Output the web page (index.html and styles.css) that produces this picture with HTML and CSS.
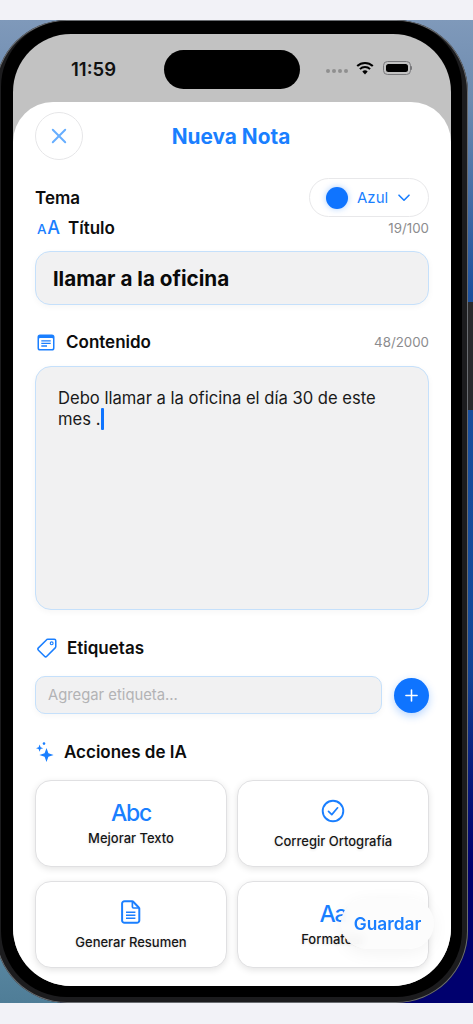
FILE: index.html
```html
<!DOCTYPE html>
<html lang="es">
<head>
<meta charset="utf-8">
<title>Nueva Nota</title>
<link rel="stylesheet" href="styles.css">
</head>
<body>
<div class="wallpaper">
  <div class="side-button"></div>
  <div class="frame">
    <div class="bezel">
      <div class="screen">
        <div class="island"></div>
        <div class="status">
          <span class="time">11:59</span>
          <div class="status-right">
            <div class="signal"><i></i><i></i><i></i><i></i></div>
            <svg class="wifi" viewBox="0 0 18 14"><path d="M9 13.6 6.3 10.6a3.9 3.9 0 0 1 5.4 0Z" fill="#000"/><path d="M3.9 8.1a7.4 7.4 0 0 1 10.2 0" fill="none" stroke="#000" stroke-width="2"/><path d="M1.2 5.1a11.4 11.4 0 0 1 15.6 0" fill="none" stroke="#000" stroke-width="2.1"/></svg>
            <div class="battery"><div class="battery-fill"></div></div>
            <div class="battery-tip"></div>
          </div>
        </div>
        <div class="sheet">
          <header class="head">
            <button class="close"><svg viewBox="0 0 18 18"><path d="M2 2 16 16M16 2 2 16" fill="none" stroke="#66aeff" stroke-width="2.2" stroke-linecap="round"/></svg></button>
            <h1 class="title">Nueva Nota</h1>
          </header>
          <div class="row theme-row">
            <span class="label">Tema</span>
            <div class="pill"><span class="dot"></span><span class="pill-text">Azul</span>
              <svg class="chev" viewBox="0 0 12 8"><path d="M1 1.2 6 6.2 11 1.2" fill="none" stroke="#1a7fff" stroke-width="1.6" stroke-linecap="round" stroke-linejoin="round"/></svg>
            </div>
          </div>
          <div class="row title-row">
            <div class="label-group">
              <span class="aa"><small>A</small>A</span>
              <span class="label">Título</span>
            </div>
            <span class="count">19/100</span>
          </div>
          <div class="field field-title">llamar a la oficina</div>
          <div class="row content-row">
            <div class="label-group group-content">
              <svg class="ic-note" viewBox="0 0 18 17"><rect x="0.5" y="0.5" width="17" height="16" rx="2.6" fill="#1a7fff"/><rect x="2" y="4" width="14" height="11" rx="1" fill="#fff"/><path d="M4.3 6.8H13.7M4.3 9.4H13.7M4.3 12H10" stroke="#1a7fff" stroke-width="1.3"/></svg>
              <span class="label">Contenido</span>
            </div>
            <span class="count">48/2000</span>
          </div>
          <div class="field field-content">Debo llamar a la oficina el día 30 de este mes .<span class="caret"></span></div>
          <div class="label-group group-tags">
            <svg class="ic-tag" viewBox="0 0 21 21"><path d="M12 1.3h6.2a1.5 1.5 0 0 1 1.5 1.5V9a2 2 0 0 1-.6 1.4l-8.8 8.8a1.7 1.7 0 0 1-2.4 0l-6.4-6.4a1.7 1.7 0 0 1 0-2.4l8.9-8.9A2 2 0 0 1 12 1.3Z" fill="none" stroke="#1a7fff" stroke-width="1.6" stroke-linejoin="round"/><circle cx="15.4" cy="5.6" r="1.5" fill="none" stroke="#1a7fff" stroke-width="1.2"/></svg>
            <span class="label">Etiquetas</span>
          </div>
          <div class="tag-row">
            <div class="field field-tag">Agregar etiqueta...</div>
            <button class="add"><svg viewBox="0 0 14 14"><path d="M7 1V13M1 7H13" stroke="#fff" stroke-width="1.7" stroke-linecap="round"/></svg></button>
          </div>
          <div class="label-group group-ai">
            <svg class="ic-spark" viewBox="0 0 18 20"><path d="M10.5 6 12.4 11.3 17.6 13 12.4 14.7 10.5 20 8.6 14.7 3.4 13 8.6 11.3Z" fill="#1a7fff"/><path d="M3.6 2.6 4.6 5.3 7.2 6.2 4.6 7.1 3.6 9.8 2.6 7.1 0 6.2 2.6 5.3Z" fill="#1a7fff"/><circle cx="8" cy="1.6" r="1.3" fill="#1a7fff"/></svg>
            <span class="label">Acciones de IA</span>
          </div>
          <div class="actions">
            <div class="card card-text"><span class="glyph">Abc</span><span class="card-label">Mejorar Texto</span></div>
            <div class="card card-icon"><svg class="ic-check" viewBox="0 0 24 24"><circle cx="12" cy="12" r="10.3" fill="none" stroke="#1a7fff" stroke-width="1.9"/><path d="M7.5 12.3 10.8 15.6 16.6 8.8" fill="none" stroke="#1a7fff" stroke-width="1.7" stroke-linecap="round" stroke-linejoin="round"/></svg><span class="card-label">Corregir Ortografía</span></div>
            <div class="card card-icon"><svg class="ic-doc" viewBox="0 0 20 24"><path d="M3.5 1.2h7.8a1 1 0 0 1 .7.3l6 6.2a1 1 0 0 1 .3.7v12a2.4 2.4 0 0 1-2.4 2.4H3.5a2.4 2.4 0 0 1-2.4-2.4V3.6a2.4 2.4 0 0 1 2.4-2.4Z" fill="none" stroke="#1a7fff" stroke-width="2" stroke-linejoin="round"/><path d="M11.4 1.6V6.8a1.2 1.2 0 0 0 1.2 1.2h5.2" fill="none" stroke="#1a7fff" stroke-width="1.7"/><path d="M5 12.2h9.4M5 15.2h9.4M5 18.2h9.4" stroke="#1a7fff" stroke-width="1.5"/></svg><span class="card-label">Generar Resumen</span></div>
            <div class="card card-text"><span class="glyph">Aa</span><span class="card-label">Formatear</span></div>
          </div>
          <button class="save">Guardar</button>
        </div>
      </div>
    </div>
  </div>
</div>
</body>
</html>
```
FILE: styles.css
```css
* { box-sizing: border-box; }
html, body { margin: 0; height: 1024px; overflow: hidden; }
body { background: #f2f2f7; padding-top: 20px; font-family: Inter, "Noto Sans", sans-serif; color: #0a0a0a; }
button { font-family: inherit; padding: 0; }
.wallpaper {
  position: relative; width: 473px; height: 983px; overflow: hidden;
  background:
    radial-gradient(circle at 100% 100%, #00006e 0, #00006e 12%, rgba(0,0,110,0) 30%),
    linear-gradient(180deg, #7f99ba 0, #6e8cb0 8%, #1b4f9c 28%, #134a9a 60%, #0a2a80 88%),
    #134a9a;
}
.wallpaper::before {
  content: ""; position: absolute; left: 0; bottom: 0; width: 60px; height: 70px;
  background: linear-gradient(0deg, #4f7d97, #5d8aa5);
}
.side-button { position: absolute; right: 0; top: 282px; width: 6px; height: 108px; background: #2a2a2c; border-left: 1px solid #4a4a4c; }
.frame {
  position: relative; margin-left: -5px; width: 473px; height: 983px; padding: 1px 6px 6px;
  background: #1c1c1e; border-radius: 72px;
  box-shadow: inset 0 0 0 1px #6a6d71;
}
.bezel { height: 100%; padding: 13px 11px 10px 12px; background: #000; border-radius: 66px; }
.screen { position: relative; height: 952px; width: 438px; background: #c2c2c2; border-radius: 58px; overflow: hidden; }
.island { position: absolute; left: 151px; top: 16px; width: 136px; height: 39px; background: #000; border-radius: 20px; }
.status { height: 68px; display: flex; justify-content: space-between; align-items: flex-start; padding: 23px 39px 0 58px; }
.time { font-size: 18.5px; font-weight: 600; line-height: 24px; color: #111; }
.status-right { display: flex; align-items: center; height: 22px; }
.signal { display: flex; gap: 2px; margin-right: 8px; margin-top: 6px; }
.signal i { display: block; width: 4px; height: 4px; border-radius: 50%; background: #8f8f8f; }
.wifi { width: 18px; height: 14px; margin-right: 9px; margin-top: -1px; }
.battery { width: 28px; height: 14px; padding: 2px; border: 1px solid #77777a; border-radius: 4.5px; }
.battery-fill { height: 100%; background: #000; border-radius: 2.5px; }
.battery-tip { width: 1.5px; height: 4px; background: #77777a; border-radius: 0 1px 1px 0; }
.sheet { position: relative; height: 884px; padding: 10px 22px 0; background: #fff; border-radius: 40px 40px 0 0; overflow: hidden; }
.head { position: relative; display: flex; justify-content: center; align-items: center; height: 48px; }
.close { position: absolute; left: 0; top: 0; width: 48px; height: 48px; display: flex; align-items: center; justify-content: center; background: #fff; border: 1px solid #e6e6e8; border-radius: 50%; }
.close svg { width: 16px; height: 16px; }
.title { margin: 2px 0 0 -2px; font-size: 20.8px; line-height: 26px; font-weight: 700; color: #1a7fff; }
.row { display: flex; justify-content: space-between; align-items: center; }
.theme-row { margin-top: 18px; height: 39px; }
.label { font-size: 17px; line-height: 20px; font-weight: 600; color: #0d0d0d; }
.pill { display: flex; align-items: center; width: 120px; height: 39px; padding-left: 16px; background: #fff; border: 1px solid #e8e8ea; border-radius: 20px; }
.dot { width: 22px; height: 22px; border-radius: 50%; background: #0f74ff; box-shadow: 0 0 6px rgba(15,116,255,.35); }
.pill-text { margin-left: 9px; font-size: 15px; font-weight: 400; color: #1a7fff; }
.chev { width: 12px; height: 8px; margin-left: 10px; }
.title-row { height: 20px; margin-top: 1px; }
.label-group { display: flex; align-items: center; height: 20px; }
.aa { width: 33px; padding-left: 2px; font-size: 18px; line-height: 20px; font-weight: 500; color: #1a7fff; letter-spacing: -.4px; }
.aa small { font-size: 13.5px; margin-right: 1px; }
.count { font-size: 13.3px; font-weight: 400; color: #8c8c8e; }
.field { background: #f1f1f2; border: 1.5px solid #c5e0fb; box-shadow: 0 2px 6px rgba(0,0,0,.04); }
.field-title { margin-top: 13px; height: 54px; padding: 0 17px; display: flex; align-items: center; border-radius: 15px; font-size: 20.7px; font-weight: 700; color: #0a0a0a; }
.content-row { height: 20px; margin-top: 27px; }
.group-content { gap: 11px; }
.ic-note { width: 18px; height: 17px; margin-left: 2px; }
.field-content { position: relative; margin-top: 14px; height: 244px; padding: 21px 44px 0 22px; border-radius: 16px; font-size: 16.6px; line-height: 21px; color: #1a1a1a; }
.caret { display: inline-block; width: 2.5px; height: 22px; margin: -6px 0 0 1px; vertical-align: -5px; background: #0f74ff; border-radius: 1px; }
.group-tags { gap: 10px; margin-top: 28px; }
.ic-tag { width: 20px; height: 20px; margin-left: 2px; }
.tag-row { display: flex; align-items: center; justify-content: space-between; margin-top: 18px; height: 38px; }
.field-tag { width: 347px; height: 38px; display: flex; align-items: center; padding: 0 12px; border-radius: 10px; font-size: 14.8px; color: #b3b3b5; }
.add { width: 35px; height: 35px; display: flex; align-items: center; justify-content: center; background: #0f74ff; border: 0; border-radius: 50%; box-shadow: 0 3px 8px rgba(15,116,255,.3); }
.add svg { width: 13px; height: 13px; }
.group-ai { gap: 10px; margin-top: 28px; }
.ic-spark { width: 18px; height: 20px; margin-left: 1px; }
.actions { display: grid; grid-template-columns: 192px 192px; grid-template-rows: 87px 87px; column-gap: 10px; row-gap: 14px; margin-top: 18px; }
.card { display: flex; flex-direction: column; align-items: center; justify-content: center; background: #fff; border: 1px solid #e0e0e2; border-radius: 16px; box-shadow: 0 2px 7px rgba(0,0,0,.11); }
.card-text { gap: 3px; }
.card-icon { gap: 10px; }
.glyph { margin-top: -2px; font-size: 23px; line-height: 28px; font-weight: 500; letter-spacing: -1.2px; color: #1a7fff; }
.card-label { font-size: 13px; line-height: 16px; font-weight: 500; color: #161616; text-shadow: 0 1px 3px rgba(0,0,0,.12); }
.ic-check { width: 24px; height: 24px; }
.ic-doc { width: 20px; height: 24px; }
.save { position: absolute; left: 328px; top: 796px; width: 93px; height: 51px; border: 0; border-radius: 26px; font-size: 17.3px; font-weight: 600; color: #1a7fff; background: rgba(252,252,252,.93); backdrop-filter: blur(5px); box-shadow: 0 4px 18px rgba(0,0,0,.05); }
```
